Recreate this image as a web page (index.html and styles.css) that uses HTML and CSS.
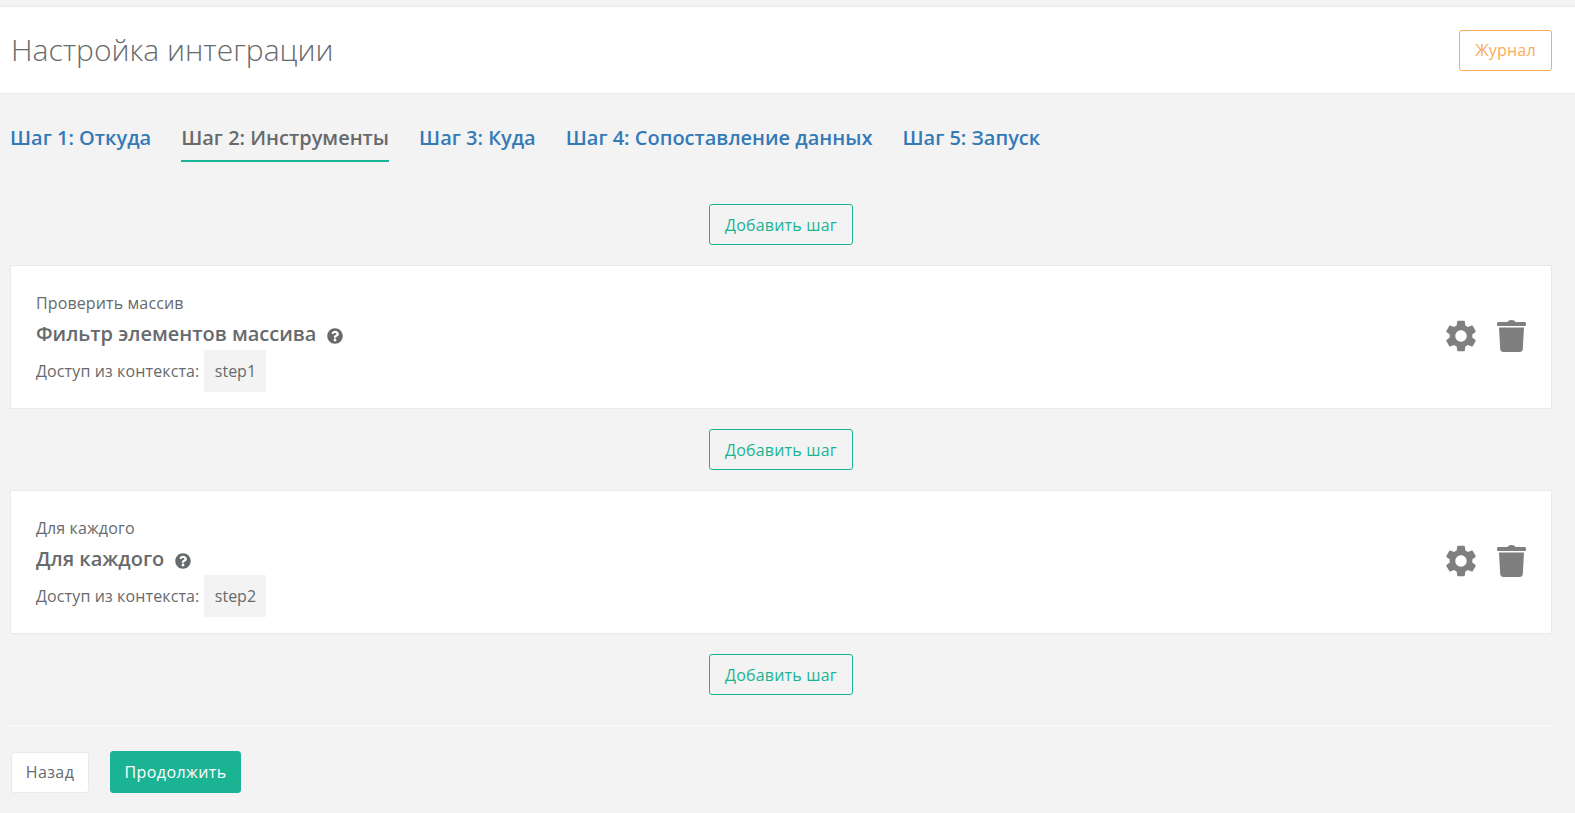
FILE: index.html
```html
<!DOCTYPE html>
<html lang="ru">
<head>
<meta charset="utf-8">
<title>Настройка интеграции</title>
<link rel="stylesheet" href="styles.css">
</head>
<body>
<header class="header">
  <h1 class="title">Настройка интеграции</h1>
  <button class="btn btn-log">Журнал</button>
</header>
<main class="content">
  <nav class="tabs">
    <a class="tab">Шаг 1: Откуда</a>
    <a class="tab active">Шаг 2: Инструменты</a>
    <a class="tab">Шаг 3: Куда</a>
    <a class="tab">Шаг 4: Сопоставление данных</a>
    <a class="tab">Шаг 5: Запуск</a>
  </nav>
  <div class="add-row first"><button class="btn btn-add">Добавить шаг</button></div>
  <section class="card">
    <div class="info">
      <div class="kind">Проверить массив</div>
      <div class="name">Фильтр элементов массива
        <svg class="help" viewBox="0 0 512 512"><path d="M504 256c0 136.997-111.043 248-248 248S8 392.997 8 256C8 119.083 119.043 8 256 8s248 111.083 248 248zM262.655 90c-54.497 0-89.255 22.957-116.549 63.758-3.536 5.286-2.353 12.415 2.715 16.258l34.699 26.31c5.205 3.947 12.621 3.008 16.665-2.122 17.864-22.658 30.113-35.797 57.303-35.797 20.429 0 45.698 13.148 45.698 32.958 0 14.976-12.363 22.667-32.534 33.976C247.128 238.528 216 254.941 216 296v4c0 6.627 5.373 12 12 12h56c6.627 0 12-5.373 12-12v-1.333c0-28.462 83.186-29.647 83.186-106.667 0-58.002-60.165-102-116.531-102zM256 338c-25.365 0-46 20.635-46 46 0 25.364 20.635 46 46 46s46-20.636 46-46c0-25.365-20.635-46-46-46z"/></svg>
      </div>
      <div class="ctx"><span class="ctx-label">Доступ из контекста:</span> <span class="var">step1</span></div>
    </div>
    <div class="actions">
      <svg class="gear" viewBox="0 0 24 24"><path d="M19.14 12.94c.04-.3.06-.61.06-.94 0-.32-.02-.64-.07-.94l2.03-1.58c.18-.14.23-.41.12-.61l-1.92-3.32c-.12-.22-.37-.29-.59-.22l-2.39.96c-.5-.38-1.03-.7-1.62-.94l-.36-2.54c-.04-.24-.24-.41-.48-.41h-3.84c-.24 0-.43.17-.47.41l-.36 2.54c-.59.24-1.13.57-1.62.94l-2.39-.96c-.22-.08-.47 0-.59.22L2.74 8.87c-.12.21-.08.47.12.61l2.03 1.58c-.05.3-.09.63-.09.94s.02.64.07.94l-2.03 1.58c-.18.14-.23.41-.12.61l1.92 3.32c.12.22.37.29.59.22l2.39-.96c.5.38 1.03.7 1.62.94l.36 2.54c.05.24.24.41.48.41h3.84c.24 0 .44-.17.47-.41l.36-2.54c.59-.24 1.13-.56 1.62-.94l2.39.96c.22.08.47 0 .59-.22l1.92-3.32c.12-.22.07-.47-.12-.61l-2.01-1.58zM12 15.6c-1.98 0-3.6-1.62-3.6-3.6s1.62-3.6 3.6-3.6 3.6 1.62 3.6 3.6-1.62 3.6-3.6 3.6z"/></svg>
      <svg class="trash" viewBox="0 0 29 32"><path d="M10.5 2C11 .7 12.500 0 14.500 0s3.500.7 4 2h9c.8 0 1.500.6 1.500 1.500V5c0 .5-.4 1-1 1H1c-.6 0-1-.5-1-1V3.500C0 2.600.7 2 1.500 2zM2 7.500h25l-1.200 21.500c-.1 1.700-1.400 3-3.100 3H6.300c-1.700 0-3-1.300-3.100-3z"/></svg>
    </div>
  </section>
  <div class="add-row"><button class="btn btn-add">Добавить шаг</button></div>
  <section class="card">
    <div class="info">
      <div class="kind">Для каждого</div>
      <div class="name">Для каждого
        <svg class="help" viewBox="0 0 512 512"><path d="M504 256c0 136.997-111.043 248-248 248S8 392.997 8 256C8 119.083 119.043 8 256 8s248 111.083 248 248zM262.655 90c-54.497 0-89.255 22.957-116.549 63.758-3.536 5.286-2.353 12.415 2.715 16.258l34.699 26.31c5.205 3.947 12.621 3.008 16.665-2.122 17.864-22.658 30.113-35.797 57.303-35.797 20.429 0 45.698 13.148 45.698 32.958 0 14.976-12.363 22.667-32.534 33.976C247.128 238.528 216 254.941 216 296v4c0 6.627 5.373 12 12 12h56c6.627 0 12-5.373 12-12v-1.333c0-28.462 83.186-29.647 83.186-106.667 0-58.002-60.165-102-116.531-102zM256 338c-25.365 0-46 20.635-46 46 0 25.364 20.635 46 46 46s46-20.636 46-46c0-25.365-20.635-46-46-46z"/></svg>
      </div>
      <div class="ctx"><span class="ctx-label">Доступ из контекста:</span> <span class="var">step2</span></div>
    </div>
    <div class="actions">
      <svg class="gear" viewBox="0 0 24 24"><path d="M19.14 12.94c.04-.3.06-.61.06-.94 0-.32-.02-.64-.07-.94l2.03-1.58c.18-.14.23-.41.12-.61l-1.92-3.32c-.12-.22-.37-.29-.59-.22l-2.39.96c-.5-.38-1.03-.7-1.62-.94l-.36-2.54c-.04-.24-.24-.41-.48-.41h-3.84c-.24 0-.43.17-.47.41l-.36 2.54c-.59.24-1.13.57-1.62.94l-2.39-.96c-.22-.08-.47 0-.59.22L2.74 8.87c-.12.21-.08.47.12.61l2.03 1.58c-.05.3-.09.63-.09.94s.02.64.07.94l-2.03 1.58c-.18.14-.23.41-.12.61l1.92 3.32c.12.22.37.29.59.22l2.39-.96c.5.38 1.03.7 1.62.94l.36 2.54c.05.24.24.41.48.41h3.84c.24 0 .44-.17.47-.41l.36-2.54c.59-.24 1.13-.56 1.62-.94l2.39.96c.22.08.47 0 .59-.22l1.92-3.32c.12-.22.07-.47-.12-.61l-2.01-1.58zM12 15.6c-1.98 0-3.6-1.62-3.6-3.6s1.62-3.6 3.6-3.6 3.6 1.62 3.6 3.6-1.62 3.6-3.6 3.6z"/></svg>
      <svg class="trash" viewBox="0 0 29 32"><path d="M10.5 2C11 .7 12.500 0 14.500 0s3.500.7 4 2h9c.8 0 1.500.6 1.500 1.500V5c0 .5-.4 1-1 1H1c-.6 0-1-.5-1-1V3.500C0 2.600.7 2 1.500 2zM2 7.500h25l-1.200 21.500c-.1 1.700-1.400 3-3.100 3H6.300c-1.700 0-3-1.300-3.100-3z"/></svg>
    </div>
  </section>
  <div class="add-row"><button class="btn btn-add">Добавить шаг</button></div>
  <div class="divider"></div>
  <footer class="footer">
    <button class="btn btn-back">Назад</button>
    <button class="btn btn-next">Продолжить</button>
  </footer>
</main>
</body>
</html>
```
FILE: styles.css
```css
* { box-sizing: border-box; }
html, body { margin: 0; height: 100%; }
body {
  background: #f3f3f3;
  font-family: "Open Sans", sans-serif;
  color: #676a6c;
  font-size: 16px;
  padding-top: 6px;
  overflow: hidden;
}
.header {
  display: flex;
  align-items: center;
  justify-content: space-between;
  height: 88px;
  background: #fff;
  border-top: 1px solid #e7eaec;
  border-bottom: 1px solid #e7eaec;
  padding: 0 23px 0 10px;
}
.title {
  margin: 0 0 2px 1px;
  font-size: 30px;
  font-weight: 300;
  color: #676a6c;
}
.btn {
  font-family: inherit;
  font-size: 16px;
  letter-spacing: .2px;
  border-radius: 3px;
  background: transparent;
  cursor: pointer;
  padding: 0;
}
.btn-log {
  width: 93px;
  height: 41px;
  border: 1px solid #f8ac59;
  color: #f8ac59;
  background: #fff;
}
.content { padding: 0 23px 0 10px; }
.tabs {
  display: flex;
  gap: 30px;
  margin-top: 24px;
}
.tab {
  font-size: 20px;
  font-weight: 600;
  color: #337ab7;
  height: 44px;
  line-height: 39px;
}
.tab.active {
  color: #676a6c;
  border-bottom: 2px solid #1ab394;
}
.add-row {
  display: flex;
  justify-content: center;
  margin: 20px 0;
}
.add-row.first { margin-top: 42px; }
.btn-add {
  width: 144px;
  height: 41px;
  border: 1px solid #1ab394;
  color: #1ab394;
}
.card {
  display: flex;
  justify-content: space-between;
  align-items: center;
  height: 144px;
  background: #fff;
  border: 1px solid #e7eaec;
  padding: 0 25px;
}
.info { display: flex; flex-direction: column; padding-top: 11px; }
.kind { line-height: 20px; margin-bottom: 7px; letter-spacing: .12px; }
.name {
  display: flex;
  align-items: center;
  gap: 11px;
  font-size: 20px;
  font-weight: 600;
  line-height: 28px;
  margin-bottom: 2px;
}
.help { width: 16px; height: 16px; margin-top: 3px; fill: #676a6c; }
.ctx {
  display: flex;
  align-items: center;
  gap: 5px;
}
.ctx-label { letter-spacing: .12px; }
.var {
  min-width: 62px;
  text-align: center;
  background: #f3f3f3;
  height: 42px;
  line-height: 42px;
}
.actions { display: flex; align-items: center; gap: 17px; margin-bottom: 2px; }
.gear { width: 38px; height: 38px; fill: #7f7f7f; }
.trash { width: 29px; height: 32px; fill: #7f7f7f; }
.divider {
  border-top: 2px dotted #fbfbfb;
  margin-top: 30px;
}
.footer {
  display: flex;
  align-items: center;
  gap: 21px;
  margin-top: 24px;
}
.btn-back {
  width: 78px;
  height: 41px;
  margin-left: 1px;
  background: #fff;
  border: 1px solid #e7eaec;
  color: #676a6c;
  letter-spacing: .4px;
}
.btn-next {
  width: 131px;
  height: 42px;
  background: #1ab394;
  border: 1px solid #1ab394;
  color: #fff;
  letter-spacing: .4px;
}
```
